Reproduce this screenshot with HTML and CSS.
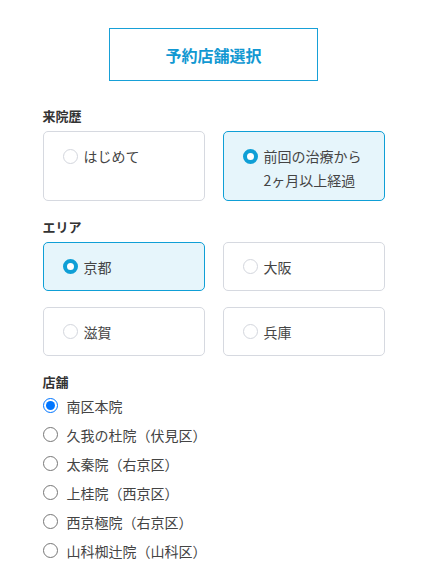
FILE: index.html
```html
<!DOCTYPE html>
<html lang="ja">
<head>
<meta charset="utf-8">
<link rel="stylesheet" href="styles.css">
</head>
<body>
<div class="page">
  <div class="title-wrap"><div class="title">予約店舗選択</div></div>

  <div class="label label-first">来院歴</div>
  <div class="grid grid-history">
    <div class="card top"><span class="dot"></span><span class="ctext">はじめて</span></div>
    <div class="card top active"><span class="dot on"></span><span class="ctext">前回の治療から<br>2ヶ月以上経過</span></div>
  </div>

  <div class="label label-area">エリア</div>
  <div class="grid grid-area">
    <div class="card active"><span class="dot on"></span><span class="ctext">京都</span></div>
    <div class="card"><span class="dot"></span><span class="ctext">大阪</span></div>
    <div class="card"><span class="dot"></span><span class="ctext">滋賀</span></div>
    <div class="card"><span class="dot"></span><span class="ctext">兵庫</span></div>
  </div>

  <div class="label label-store">店舗</div>
  <div class="stores">
    <label class="store"><input type="radio" name="s" checked><span>南区本院</span></label>
    <label class="store"><input type="radio" name="s"><span>久我の杜院（伏見区）</span></label>
    <label class="store"><input type="radio" name="s"><span>太秦院（右京区）</span></label>
    <label class="store"><input type="radio" name="s"><span>上桂院（西京区）</span></label>
    <label class="store"><input type="radio" name="s"><span>西京極院（右京区）</span></label>
    <label class="store"><input type="radio" name="s"><span>山科椥辻院（山科区）</span></label>
  </div>
</div>
</body>
</html>
```

FILE: styles.css
```css
html, body {
  margin: 0;
  padding: 0;
  background: #fff;
}
body {
  font-family: "Noto Sans CJK JP", "Noto Sans", sans-serif;
  color: #444;
}
.page {
  width: 342px;
  margin: 0 auto;
  padding-top: 28px;
}
.title-wrap {
  display: flex;
  justify-content: center;
}
.title {
  width: 207px;
  height: 51px;
  border: 1px solid #17a0d7;
  display: flex;
  align-items: center;
  justify-content: center;
  color: #1198d2;
  font-weight: bold;
  font-size: 16px;
}
.label {
  font-size: 13px;
  font-weight: bold;
  color: #333;
  line-height: 20px;
  margin-top: 15px;
  margin-bottom: 5px;
}
.label-first {
  margin-top: 25px;
  margin-bottom: 5px;
}
.label-area {
  margin-top: 16px;
  margin-bottom: 5px;
}
.label-store {
  margin-top: 16px;
  margin-bottom: -1px;
}
.grid {
  display: grid;
  grid-template-columns: 1fr 1fr;
  column-gap: 18px;
}
.grid-area {
  row-gap: 16px;
}
.card {
  box-sizing: border-box;
  height: 49px;
  border: 1px solid #d6d9e0;
  border-radius: 5px;
  background: #fff;
  display: flex;
  align-items: center;
  padding-left: 19px;
  font-size: 14px;
  color: #444;
}
.card.top {
  height: 70px;
  align-items: flex-start;
  padding-top: 12px;
}
.card.active {
  background: #e6f5fb;
  border-color: #0f9fd6;
}
.dot {
  box-sizing: border-box;
  flex: none;
  width: 15px;
  height: 15px;
  border-radius: 50%;
  border: 1px solid #d3d6dd;
  background: #fff;
  margin-right: 6px;
}
.card.top .dot {
  margin-top: 5px;
}
.dot.on {
  border: 4px solid #0f9fd6;
}
.ctext {
  line-height: 24px;
}
.stores {
  display: flex;
  flex-direction: column;
}
.store {
  display: flex;
  align-items: center;
  height: 29px;
  font-size: 14px;
  color: #444;
}
.store input {
  margin: 0 9px 0 0;
  width: 15px;
  height: 15px;
}
```
